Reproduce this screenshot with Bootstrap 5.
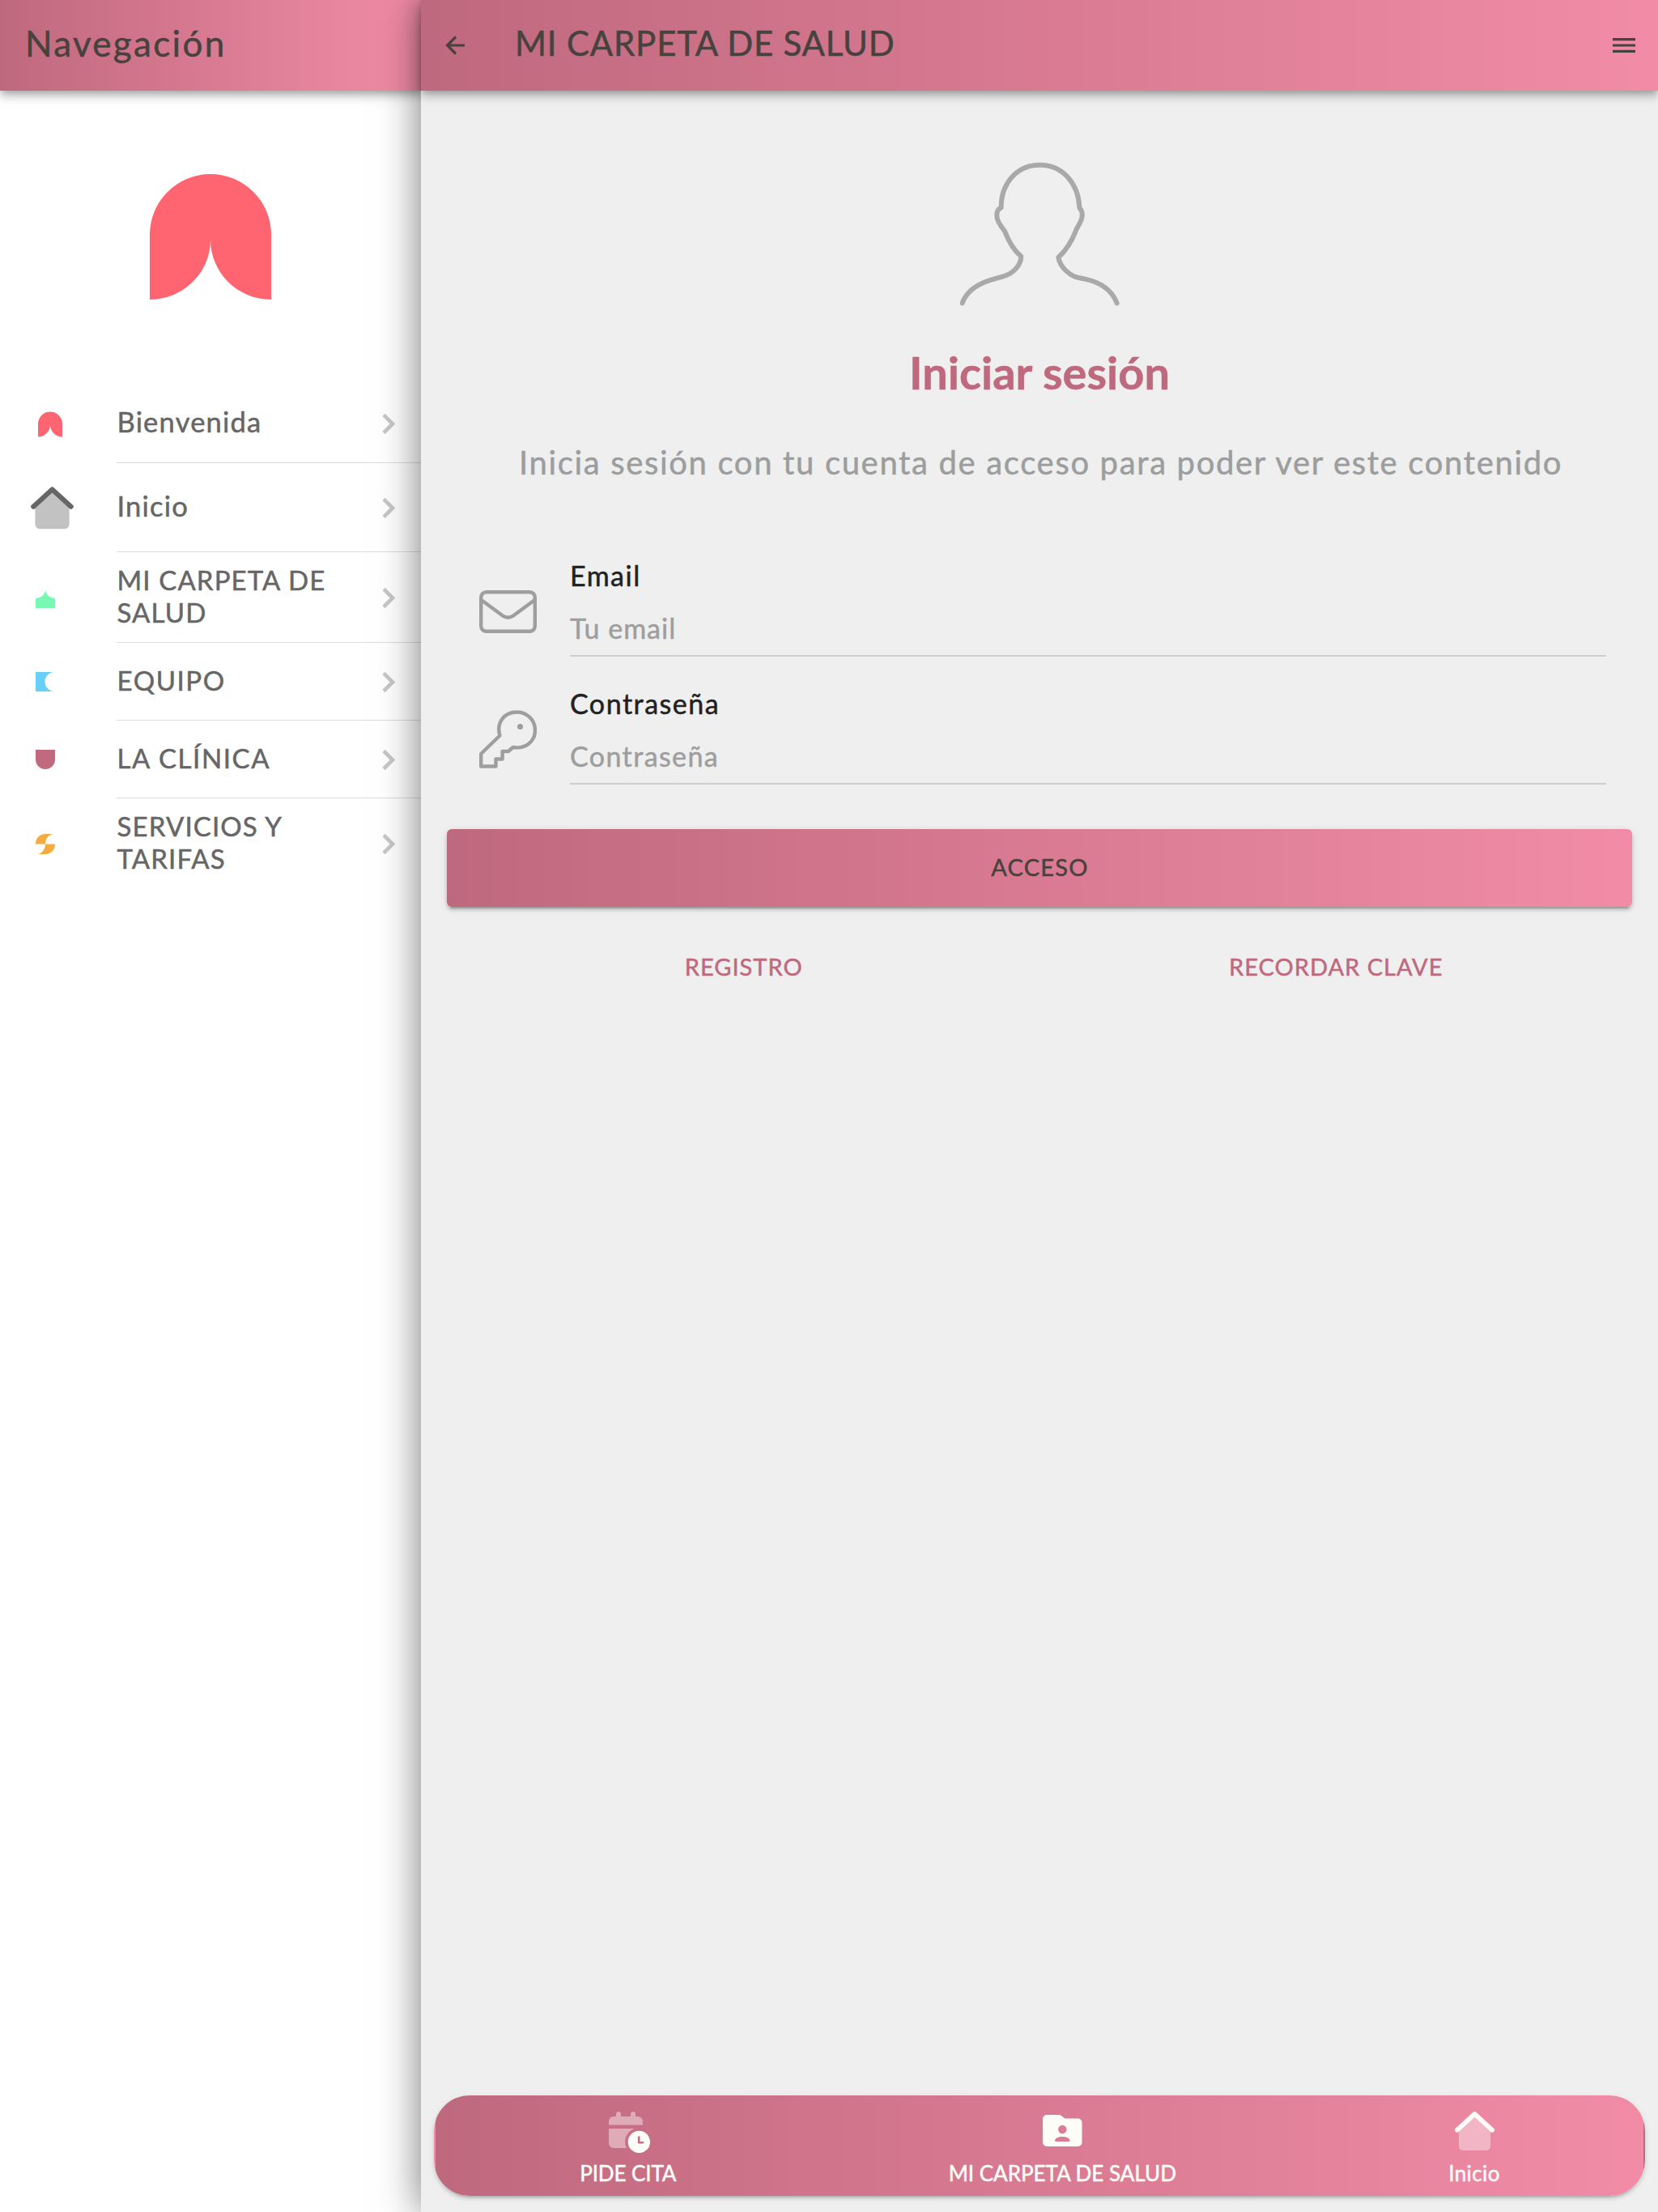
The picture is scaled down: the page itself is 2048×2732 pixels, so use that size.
<!DOCTYPE html>
<html lang="es">
<head>
<meta charset="utf-8">
<meta name="viewport" content="width=device-width, initial-scale=1">
<title>Mi carpeta de salud</title>
<link href="https://cdn.jsdelivr.net/npm/bootstrap@5.3.0/dist/css/bootstrap.min.css" rel="stylesheet">
<style>
:root{--rose:#bf697e;--pink:#f28ca6;--ink:#48423f}
body{font-family:Lato,"Open Sans",sans-serif;background:#efefef;-webkit-text-stroke:.5px}
.app{height:2732px;overflow:hidden}
.side-panel{width:520px;background:#fff}
.main-view{background:#efefef;box-shadow:0 0 48px rgba(0,0,0,.54);z-index:2;min-width:0}
.rose-bg{background-image:linear-gradient(90deg,var(--rose),var(--pink))}
.topbar{height:112px;color:var(--ink);font-size:42px;line-height:48px;box-shadow:0 4px 8px -2px rgba(0,0,0,.2),0 8px 10px rgba(0,0,0,.14),0 2px 20px rgba(0,0,0,.12)}
.topbar span{padding-bottom:7px}
.topbar-side{padding-left:31px;font-size:44px;letter-spacing:2.3px}
.topbar-main{padding:0 28px 0 30px;letter-spacing:.8px}
.topbar-main .title-text{margin-left:62px}
.brand-logo{margin:103px auto 105px;width:150px;height:155px}
.menu-row{height:96px;color:#666;font-size:33px;line-height:40px;text-decoration:none}
.menu-row.h97{height:97px}.menu-row.h110{height:110px}.menu-row.h112{height:112px}
.menu-icon{width:144px;padding-left:44px}
.menu-icon.p47{padding-left:47px}.menu-icon.p38{padding-left:38px}
.menu-body{border-bottom:1px solid #dcdcdc;padding-right:31px}
.menu-row:last-child .menu-body{border-color:transparent}
.menu-text{padding-bottom:4px;margin-left:.5px}
.ls-1{letter-spacing:1.13px}.ls-15{letter-spacing:1.6px}
.ls-2{font-size:34.5px;letter-spacing:1.2px}
.avatar{margin-top:88px;margin-left:1px}
.login-title{margin:48px 0 0;font-size:56px;line-height:68px;font-weight:700;color:var(--rose)}
.login-sub{margin:51px 0 0;padding-left:3px;font-size:40px;line-height:52px;letter-spacing:1.66px;color:#9c9e9e}
.login-form{margin-top:94px;padding-left:72px;padding-right:64px}
.field-row{height:120px;gap:40px;margin-bottom:38px}
.field-row:last-child{margin-bottom:0}
.field-icon{width:72px}
.field-row label{font-size:34px;line-height:40px;letter-spacing:1.5px;color:#212121}
.field-row .form-control{height:80px;padding:10px 0 0;font-size:34px;letter-spacing:1.4px;background:transparent;border:0;border-bottom:2px solid #d0d0d0;border-radius:0;-webkit-text-stroke:.5px}
.field-row #mail{letter-spacing:1px}
.field-row .form-control::placeholder{color:#9e9e9e;opacity:1}
.btn-access{margin:55px 32px 0;height:96px;padding:0 0 2px 1px;border:0;border-radius:6px;color:var(--ink);font-size:29px;letter-spacing:1.2px;-webkit-text-stroke:.5px;box-shadow:0 6px 2px -4px rgba(0,0,0,.2),0 4px 4px rgba(0,0,0,.14),0 2px 10px rgba(0,0,0,.12)}
.links{margin:54px 32px 0;padding-left:1px;font-size:29px;line-height:40px;letter-spacing:1.02px}
.links a{color:var(--rose);text-decoration:none}
.tabbar-pill{height:124px;margin:auto 16px 20px;border:2px solid transparent;border-radius:44px;padding:18px 9px 0 10px;box-shadow:0 6px 2px -4px rgba(0,0,0,.12),0 4px 4px rgba(0,0,0,.1),0 2px 8px rgba(0,0,0,.08)}
.tab-item{color:#fffdf8;font-size:26px;line-height:32px;text-decoration:none;white-space:nowrap}
.tab-item .tab-glyph{height:60px}
.ls-pide{letter-spacing:-.1px}.ls-ini{letter-spacing:.4px}
svg{display:block;flex:none}
</style>
</head>
<body>
<div class="app d-flex">
  <aside class="side-panel d-flex flex-column flex-shrink-0">
    <header class="topbar topbar-side rose-bg d-flex align-items-center flex-shrink-0"><span>Navegación</span></header>
    <svg class="brand-logo" viewBox="0 0 150 155"><path id="arch" fill="#ff6570" d="M0 155V75a75 75 0 0 1 150 0V155C109 155 75 122 75 81C75 122 41 155 0 155Z"/></svg>
    <nav>
      <a class="menu-row h97 d-flex" href="#">
        <div class="menu-icon p47 d-flex align-items-center"><svg width="30" height="32" viewBox="0 0 150 155"><use href="#arch"/></svg></div>
        <div class="menu-body flex-grow-1 d-flex align-items-center justify-content-between"><span class="menu-text ls-2">Bienvenida</span><svg width="18" height="28" viewBox="0 0 18 28"><path id="chev" d="M3 3.500 14 14.500 3 25.500" fill="none" stroke="#c7c7c7" stroke-width="4.600"/></svg></div>
      </a>
      <a class="menu-row h110 d-flex" href="#">
        <div class="menu-icon p38 d-flex align-items-center"><svg width="53" height="53" viewBox="0 0 49 48.500"><path d="M5 23 24.500 5 44 23V43a5 5 0 0 1-5 5H10a5 5 0 0 1-5-5Z" fill="#c2c2c2"/><path d="M3 22.700 24.500 3 46 22.700" fill="none" stroke="#666" stroke-width="5.600" stroke-linecap="round" stroke-linejoin="round"/></svg></div>
        <div class="menu-body flex-grow-1 d-flex align-items-center justify-content-between"><span class="menu-text ls-2">Inicio</span><svg width="18" height="28" viewBox="0 0 18 28"><use href="#chev"/></svg></div>
      </a>
      <a class="menu-row h112 d-flex" href="#">
        <div class="menu-icon d-flex align-items-center"><svg class="mt-1" width="24" height="22" viewBox="0 0 24 22"><path fill="#78f8b2" d="M0 10C7 9 11 6 12 0C13 6 17 9 24 10V22H0Z"/></svg></div>
        <div class="menu-body flex-grow-1 d-flex align-items-center justify-content-between"><span class="menu-text ls-1">MI CARPETA DE<br>SALUD</span><svg width="18" height="28" viewBox="0 0 18 28"><use href="#chev"/></svg></div>
      </a>
      <a class="menu-row d-flex" href="#">
        <div class="menu-icon d-flex align-items-center"><svg width="24" height="24" viewBox="0 0 24 24"><path fill="#68d0f7" d="M0 0H23.500A12 12 0 0 0 23.500 24H0Z"/></svg></div>
        <div class="menu-body flex-grow-1 d-flex align-items-center justify-content-between"><span class="menu-text ls-15">EQUIPO</span><svg width="18" height="28" viewBox="0 0 18 28"><use href="#chev"/></svg></div>
      </a>
      <a class="menu-row d-flex" href="#">
        <div class="menu-icon d-flex align-items-center"><svg width="24" height="24" viewBox="0 0 24 24"><path fill="#c0697f" d="M0 0H24V12a12 12 0 0 1-24 0Z"/></svg></div>
        <div class="menu-body flex-grow-1 d-flex align-items-center justify-content-between"><span class="menu-text ls-15">LA CLÍNICA</span><svg width="18" height="28" viewBox="0 0 18 28"><use href="#chev"/></svg></div>
      </a>
      <a class="menu-row h112 d-flex" href="#">
        <div class="menu-icon d-flex align-items-center"><svg width="24" height="25" viewBox="0 0 24 25"><path fill="#f5ac3e" d="M0 12.500C0 5 5 0 12 0H22C15.500 1 12.300 6 12 12.500ZM24 12.500C24 20 19 25 12 25H2C8.500 24 11.700 19 12 12.500Z"/></svg></div>
        <div class="menu-body flex-grow-1 d-flex align-items-center justify-content-between"><span class="menu-text ls-1">SERVICIOS Y<br>TARIFAS</span><svg width="18" height="28" viewBox="0 0 18 28"><use href="#chev"/></svg></div>
      </a>
    </nav>
  </aside>

  <main class="main-view position-relative flex-grow-1 d-flex flex-column">
    <header class="topbar topbar-main rose-bg d-flex align-items-center flex-shrink-0">
      <svg width="24" height="26" viewBox="0 0 24 26"><path d="M13 2.500 2.500 13 13 23.500M2.500 13H24" fill="none" stroke="#48423f" stroke-width="3.200"/></svg>
      <span class="title-text">MI CARPETA DE SALUD</span>
      <svg class="ms-auto" width="28" height="18" viewBox="0 0 28 18"><path d="M0 1.600H28M0 9H28M0 16.400H28" stroke="#48423f" stroke-width="3.200"/></svg>
    </header>

    <svg class="avatar align-self-center" width="197" height="178" viewBox="257 120 591 534"><path d="M265 643C281 597 320 570 385 553C425 543 440 538 459 520C474 505 483 487 483 470C455 447 437 415 422 376C403 353 392 335 393 318C393 303 398 293 409 290C408 200 467 131 552 131C637 131 696 200 699 290C706 297 710 308 709 320C708 338 697 353 689 367C674 407 655 443 621 474C624 492 637 512 650 524C673 546 688 548 717 553C781 566 819 594 838 643" fill="none" stroke="#a9a9a9" stroke-width="18" stroke-linecap="round" stroke-linejoin="round"/></svg>
    <h1 class="login-title text-center">Iniciar sesión</h1>
    <p class="login-sub text-center">Inicia sesión con tu cuenta de acceso para poder ver este contenido</p>

    <form class="login-form">
      <div class="field-row d-flex">
        <div class="field-icon d-flex align-items-center pt-2"><svg width="71" height="53" viewBox="0 0 71 53"><g fill="none" stroke="#9e9e9e" stroke-width="4.400"><rect x="2.200" y="2.200" width="66.600" height="48.600" rx="6.500"/><path d="M2.500 12 29 31.500Q35.500 36 42 31.500L68.500 12"/></g></svg></div>
        <div class="flex-grow-1"><label class="d-block" for="mail">Email</label><input class="form-control shadow-none" id="mail" type="email" placeholder="Tu email"></div>
      </div>
      <div class="field-row d-flex">
        <div class="field-icon d-flex align-items-center pt-2"><svg width="71" height="72" viewBox="0 0 71 72"><path d="M25.400 31.500C21 16 30 2.500 46.500 2.500C59 2.500 69 12.500 69 25C69 38.500 57.500 48.500 41.500 46L36 51H28.600V60.500H20.500V69.500H2.200V54Z" fill="none" stroke="#9e9e9e" stroke-width="4.400" stroke-linejoin="round"/><circle cx="50.500" cy="20.500" r="3.500" fill="#9e9e9e"/></svg></div>
        <div class="flex-grow-1"><label class="d-block" for="pass">Contraseña</label><input class="form-control shadow-none" id="pass" type="password" placeholder="Contraseña"></div>
      </div>
    </form>

    <button class="btn btn-access rose-bg" type="button">ACCESO</button>
    <div class="links row g-0 text-center"><div class="col-6"><a href="#">REGISTRO</a></div><div class="col-6"><a href="#">RECORDAR CLAVE</a></div></div>

    <nav class="tabbar-pill rose-bg d-flex justify-content-around">
      <a class="tab-item d-flex flex-column align-items-center px-2" href="#">
        <div class="tab-glyph ps-1"><svg width="51" height="51" viewBox="0 0 51 51"><defs><mask id="cut"><rect width="51" height="51" fill="#fff"/><circle cx="37.400" cy="37.400" r="17.300" fill="#000"/></mask></defs><path mask="url(#cut)" fill="#fff" fill-opacity=".42" d="M0 16.500V12a6 6 0 0 1 6-6H9V3a3 3 0 0 1 6 0V6H27V3a3 3 0 0 1 6 0V6h3a6 6 0 0 1 6 6V16.500ZM0 21H42V45H6a6 6 0 0 1-6-6Z"/><circle cx="37.400" cy="37.400" r="13.700" fill="#fffdf8"/><path d="M37.200 31.500V38.200H42" fill="none" stroke="#c66f84" stroke-width="2.600" stroke-linecap="round" stroke-linejoin="round"/></svg></div>
        <span class="ls-pide">PIDE CITA</span>
      </a>
      <a class="tab-item d-flex flex-column align-items-center px-2" href="#">
        <div class="tab-glyph pt-1"><svg width="49" height="39" viewBox="0 0 49 39"><path fill="#fffdf8" d="M5 0H19.500Q21.500 0 23 1.200L27.500 4.500H43.500a5 5 0 0 1 5 5V34a5 5 0 0 1-5 5H5a5 5 0 0 1-5-5V5A5 5 0 0 1 5 0Z"/><g fill="#db7e95"><circle cx="24.300" cy="18" r="5.200"/><path d="M15.200 33V31.500C15.200 28.500 19.500 27 24.300 27S33.300 28.500 33.300 31.500V33Z"/></g></svg></div>
        <span>MI CARPETA DE SALUD</span>
      </a>
      <a class="tab-item d-flex flex-column align-items-center px-2" href="#">
        <div class="tab-glyph"><svg width="49" height="48.500" viewBox="0 0 49 48.500"><path d="M5 24 24.500 7 44 24V43a5 5 0 0 1-5 5H10a5 5 0 0 1-5-5Z" fill="#f1b5c5"/><path d="M3 22.700 24.500 3 46 22.700" fill="none" stroke="#fffdf8" stroke-width="5.800" stroke-linecap="round" stroke-linejoin="round"/></svg></div>
        <span class="ls-ini">Inicio</span>
      </a>
    </nav>
  </main>
</div>
<script src="https://cdn.jsdelivr.net/npm/bootstrap@5.3.0/dist/js/bootstrap.bundle.min.js"></script>
</body>
</html>
